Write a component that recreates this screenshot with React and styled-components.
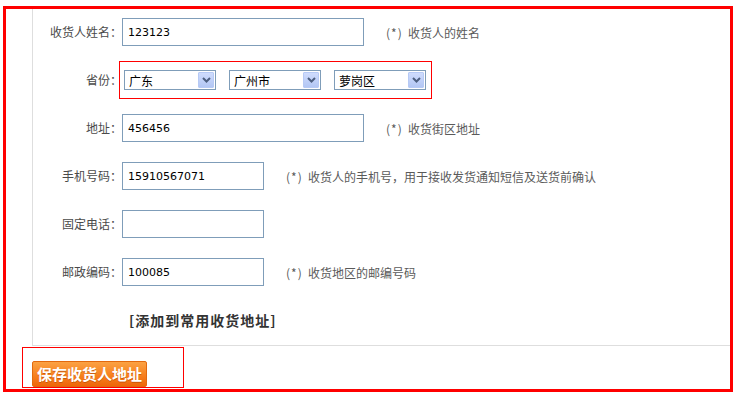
import React from "react";
import styled, { createGlobalStyle } from "styled-components";

const GlobalStyle = createGlobalStyle`
  html, body {
    margin: 0;
    padding: 0;
    background: #fff;
    font-family: "Noto Sans CJK SC", "Liberation Sans", sans-serif;
    font-size: 12px;
  }
`;

const Frame = styled.div`
  box-sizing: border-box;
  margin: 6px 0 0 3px;
  width: 730px;
  height: 386px;
  border: 3px solid #ff0000;
  display: flex;
  flex-direction: column;
`;

const Panel = styled.div`
  box-sizing: border-box;
  margin-left: 26px;
  height: 337px;
  border-left: 1px solid #dedede;
  border-bottom: 1px solid #dedede;
  padding-top: 9px;
  display: flex;
  flex-direction: column;
  gap: 20px;
`;

const Row = styled.div`
  height: 28px;
  display: flex;
  align-items: center;
`;

const Label = styled.div`
  width: 89px;
  flex-shrink: 0;
  text-align: right;
  color: #4a4a4a;
  font-size: 12px;
  line-height: 28px;
`;

const Input = styled.div`
  box-sizing: border-box;
  width: ${(p) => (p.$wide ? 242 : 142)}px;
  height: 28px;
  border: 1px solid #7f9db9;
  background: #fff;
  padding-left: 5px;
  display: flex;
  align-items: center;
  font-family: "DejaVu Sans", "Liberation Sans", sans-serif;
  font-size: 11px;
  color: #000;
`;

const Hint = styled.div`
  margin-left: 22px;
  color: #5a5a5a;
  font-size: 12px;
  white-space: nowrap;
`;

const Star = styled.span`
  display: inline-block;
  width: 16px;
  margin-right: 6px;
  letter-spacing: 1px;
`;

const SelectGroup = styled.div`
  box-sizing: border-box;
  margin-left: -3px;
  height: 38px;
  border: 1px solid #ff0000;
  padding: 8px 5px 8px 4px;
  display: flex;
  gap: 13px;
  flex-shrink: 0;
`;

const Select = styled.div`
  box-sizing: border-box;
  width: 92px;
  height: 20px;
  border: 1px solid #7f9db9;
  background: #fff;
  display: flex;
  align-items: center;
  justify-content: space-between;
  padding: 1px 1px 1px 4px;
  font-size: 12px;
  color: #000;
`;

const DropButton = styled.span`
  box-sizing: border-box;
  width: 16px;
  height: 16px;
  border: 1px solid #b7caf5;
  border-radius: 1px;
  background: linear-gradient(#cfdcfd, #b3c7f4);
  display: flex;
  align-items: center;
  justify-content: center;
`;

const AddLink = styled.div`
  margin: 4px 0 0 96px;
  font-size: 14px;
  font-weight: bold;
  color: #333;
  letter-spacing: 1px;
  line-height: 20px;
`;

const ButtonBox = styled.div`
  box-sizing: border-box;
  margin: 1px 0 0 16px;
  width: 162px;
  height: 41px;
  border: 1px solid #ff0000;
  padding: 13px 0 0 9px;
`;

const SaveButton = styled.button`
  box-sizing: border-box;
  width: 115px;
  height: 26px;
  padding: 0;
  border: 1px solid #e2690e;
  border-radius: 2px;
  background: linear-gradient(#fba243, #f7801f 55%, #ee6609);
  color: #fff;
  font-family: "Noto Sans CJK SC", sans-serif;
  font-size: 15px;
  font-weight: bold;
  line-height: 24px;
  text-shadow: 0 1px 0 rgba(160, 60, 0, 0.5);
`;

const Chevron = () => (
  <svg width="9" height="6" viewBox="0 0 9 6">
    <path d="M1 1 L4.5 4.5 L8 1" fill="none" stroke="#4d5f80" strokeWidth="2" />
  </svg>
);

const Dropdown = ({ value }) => (
  <Select>
    <span>{value}</span>
    <DropButton>
      <Chevron />
    </DropButton>
  </Select>
);

const Note = ({ children }) => (
  <Hint>
    <Star>(*)</Star>
    {children}
  </Hint>
);

const App = () => {
  return (
    <>
      <GlobalStyle />
      <Frame>
        <Panel>
          <Row>
            <Label>收货人姓名：</Label>
            <Input $wide>123123</Input>
            <Note>收货人的姓名</Note>
          </Row>
          <Row>
            <Label>省份：</Label>
            <SelectGroup>
              <Dropdown value="广东" />
              <Dropdown value="广州市" />
              <Dropdown value="萝岗区" />
            </SelectGroup>
          </Row>
          <Row>
            <Label>地址：</Label>
            <Input $wide>456456</Input>
            <Note>收货街区地址</Note>
          </Row>
          <Row>
            <Label>手机号码：</Label>
            <Input>15910567071</Input>
            <Note>收货人的手机号，用于接收发货通知短信及送货前确认</Note>
          </Row>
          <Row>
            <Label>固定电话：</Label>
            <Input />
          </Row>
          <Row>
            <Label>邮政编码：</Label>
            <Input>100085</Input>
            <Note>收货地区的邮编号码</Note>
          </Row>
          <AddLink>[添加到常用收货地址]</AddLink>
        </Panel>
        <ButtonBox>
          <SaveButton>保存收货人地址</SaveButton>
        </ButtonBox>
      </Frame>
    </>
  );
};

export default App;
